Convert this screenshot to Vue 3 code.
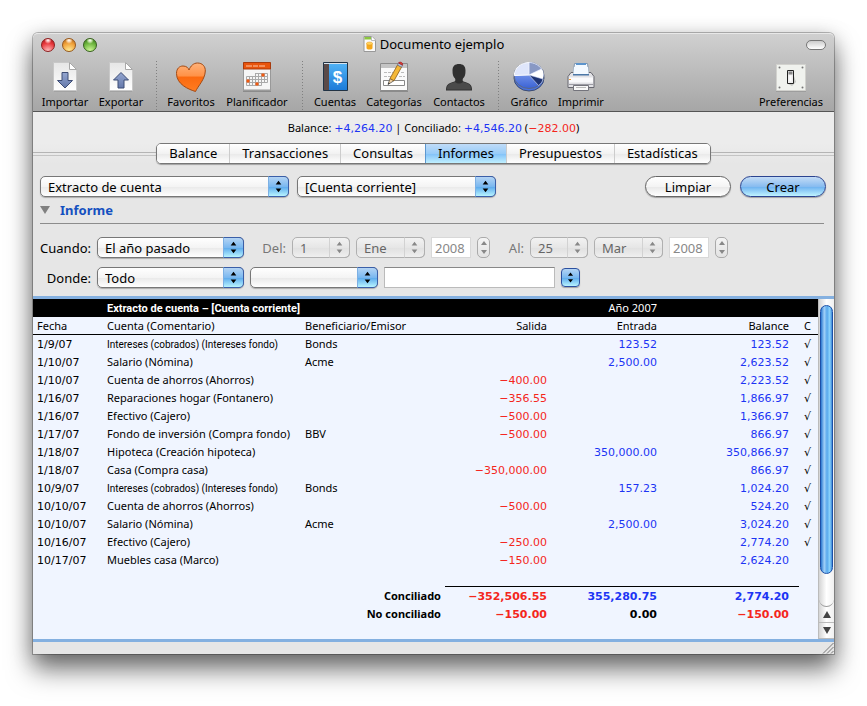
<template>
  <main class="window">
    <header class="chrome">
      <div class="titlebar">
        <div class="lights">
          <button class="light red" aria-label="Cerrar"></button>
          <button class="light amber" aria-label="Minimizar"></button>
          <button class="light green" aria-label="Ampliar"></button>
        </div>
        <h1 class="title">
          <svg width="13" height="16" viewBox="0 0 13 16">
            <path d="M1 .5h8l3.500 3.500v11.500H1z" fill="#fafafa" stroke="#999" />
            <path d="M1.500 1h7v2.500h-7z" fill="#8cc63f" />
            <path d="M8.500.5v4h4" fill="#fff" stroke="#bbb" />
            <path d="M3.500 7.500v4.500c0 2 6 2 6 0V7.500z" fill="#f5a81c" />
            <ellipse cx="6.500" cy="7.500" rx="3" ry="1.500" fill="#ffd35c" stroke="#e8951a" stroke-width=".5" />
          </svg>
          Documento ejemplo
        </h1>
        <div class="titlebar-end">
          <button class="pill" aria-label="Barra de herramientas"></button>
        </div>
      </div>

      <nav class="toolbar">
        <button class="tool w56">
          <svg viewBox="0 0 32 32">
            <path d="M5 29.500h22v1H5z" fill="#777" opacity=".5" />
            <path d="M4.500 1.500h16l7 7v21h-23z" fill="url(#paper)" stroke="#c8c8c8" />
            <path d="M20.500 1.500v7h7z" fill="#fff" stroke="#a8a8a8" />
            <path d="M13 11.500h6v8h4.500L16 27l-7.500-7.500H13z" fill="url(#arrow)" stroke="#3d4c74" stroke-linejoin="round" />
            <defs>
              <linearGradient id="paper" x2="0" y2="1">
                <stop offset="0" stop-color="#e6e6e6" />
                <stop offset="1" stop-color="#fff" />
              </linearGradient>
              <linearGradient id="arrow" x2="0" y2="1">
                <stop offset="0" stop-color="#94a6d0" />
                <stop offset="1" stop-color="#6478aa" />
              </linearGradient>
            </defs>
          </svg>
          Importar
        </button>
        <button class="tool w56">
          <svg viewBox="0 0 32 32">
            <path d="M5 29.500h22v1H5z" fill="#777" opacity=".5" />
            <path d="M4.500 1.500h16l7 7v21h-23z" fill="url(#paper)" stroke="#c8c8c8" />
            <path d="M20.500 1.500v7h7z" fill="#fff" stroke="#a8a8a8" />
            <path d="M13 27h6v-8h4.500L16 11.500 8.500 19H13z" fill="url(#arrow)" stroke="#3d4c74" stroke-linejoin="round" />
          </svg>
          Exportar
        </button>
        <span class="divider"></span>
        <button class="tool w56">
          <svg viewBox="0 0 32 32">
            <defs>
              <linearGradient id="heart" x2="0" y2="1">
                <stop offset="0" stop-color="#ffb27a" />
                <stop offset=".45" stop-color="#ff9248" />
                <stop offset=".5" stop-color="#fb6a10" />
                <stop offset="1" stop-color="#ff7d22" />
              </linearGradient>
            </defs>
            <path d="M20.500 30.500C14 28.500 1.500 23.500 1.500 12.500 1.500 7.500 4.500 5 8 5c3.500 0 5.500 2 6 4C15.500 5 18.500 2 22.500 2c5 0 8 3.500 7.800 8C30 18.500 23 25 20.500 30.500z" fill="url(#heart)" stroke="#a34a14" />
          </svg>
          Favoritos
        </button>
        <button class="tool w76">
          <svg viewBox="0 0 32 32">
            <path d="M2 29.500h28v1.500H2z" fill="#666" opacity=".5" />
            <path d="M2.500 1.500h27v27.500h-27z" fill="#f6f6f6" stroke="#999" />
            <path d="M2.500 1.500h27V8h-27z" fill="#e8540c" stroke="#a83a0c" />
            <path d="M5 5h6m1 0h5m1 0h6" stroke="#ffc9a8" />
            <path d="M14.500 12.500h12v3h-12zM5.500 15.500h21v3h-21zM5.500 18.500h21v3h-21zM5.500 21.500h15v3h-15zM8.500 15v9.500M11.500 15v9.500M14.500 12v12M17.500 12v12M20.500 12v12M23.500 12v9" fill="none" stroke="#aaa" />
            <path d="M20.500 12.500h3v3h-3zM5.500 18.500h3v3h-3zM14.500 21.500h3v3h-3z" fill="#f25a10" />
          </svg>
          Planificador
        </button>
        <span class="divider"></span>
        <button class="tool w52">
          <svg viewBox="0 0 32 32">
            <defs>
              <linearGradient id="book" x2="0" y2="1">
                <stop offset="0" stop-color="#52b4f6" />
                <stop offset="1" stop-color="#1c7ad8" />
              </linearGradient>
            </defs>
            <path d="M4.500 1.500h24v28h-24z" fill="url(#book)" stroke="#234" />
            <path d="M5 2h5v27H5z" fill="#5a4a48" />
            <path d="M5 2.500h23" stroke="#d8e4ee" />
            <text x="18.500" y="22" class="dollar">$</text>
          </svg>
          Cuentas
        </button>
        <button class="tool w66">
          <svg viewBox="0 0 32 32">
            <path d="M2 29.500h28v1.500H2z" fill="#666" opacity=".5" />
            <path d="M2.500 2.500h27v27h-27z" fill="#fafafa" stroke="#8c8c8c" />
            <path d="M3 3h26v4H3z" fill="#c4c4c4" />
            <path d="M6 11.500h9m8 0h4M6 15.500h7m8 0h6" stroke="#bbb" stroke-dasharray="3 1" />
            <path d="M5.500 19.500h21v5h-21z" fill="#fff" stroke="#888" />
            <path d="M10 23.500l2-6 4 2.200z" fill="#f0d0a0" stroke="#444" stroke-width=".7" />
            <path d="M12 17.500L19.500 4l4 2.200L16 19.700z" fill="#f4b838" stroke="#8a5c18" stroke-width=".8" />
            <path d="M19.500 4l1-2 4 2.200-1 2z" fill="#b8c4dc" stroke="#667" stroke-width=".6" />
            <path d="M20.500 2c1-2 5-.5 4 2.200z" fill="#dc4030" stroke="#912" stroke-width=".6" />
            <path d="M10 23.500l.7-2 1.200.8z" fill="#222" />
          </svg>
          Categorías
        </button>
        <button class="tool w64">
          <svg viewBox="0 0 32 32">
            <path d="M3 29.500c0-6 1.500-6.500 8.500-9 1-.5 1-2 .5-3-2-2-2.500-4-2.500-8C9.500 5 12 3 16 3s6.500 2 6.500 6.500c0 4-.5 6-2.500 8-.5 1-.5 2.500.5 3 7 2.500 8.500 3 8.500 9z" fill="#303030" />
            <path d="M4 28.500c0-5 1.500-5.500 8-7.500 3 2 5 2 8 0 6.500 2 8 2.500 8 7.500z" fill="#4a4a4a" />
          </svg>
          Contactos
        </button>
        <span class="divider"></span>
        <button class="tool w48">
          <svg viewBox="0 0 32 32">
            <defs>
              <linearGradient id="pie" x2="0" y2="1">
                <stop offset="0" stop-color="#9cb6fa" />
                <stop offset="1" stop-color="#3a62d4" />
              </linearGradient>
            </defs>
            <ellipse cx="16" cy="17" rx="15" ry="13" fill="#4a72dc" stroke="#3c4c70" />
            <ellipse cx="16" cy="14.500" rx="15" ry="13" fill="url(#pie)" stroke="#5c6884" />
            <path d="M16 14V1.500C8 1.500 1.300 7 1.300 14.500z" fill="#dfe6fb" stroke="#fff" />
            <path d="M16 14V1.500c5 0 10 2.500 12.500 6.500z" fill="#8898c4" stroke="#dde4f8" />
            <path d="M16 14l13-6c2 3 2 7 .5 10.500z" fill="#fff" />
            <path d="M16 14l14 4c-.5 3-2.500 5-4.500 6.500z" fill="#1f3474" stroke="#dde4f8" stroke-width=".6" />
          </svg>
          Gráfico
        </button>
        <button class="tool w56">
          <svg viewBox="0 0 32 32">
            <path d="M9.500 2.500h13l1.500 11H8z" fill="#f3f9ff" stroke="#8298b0" />
            <path d="M11 2h10v2H11z" fill="#5c94cc" />
            <path d="M6 11.500h20l3 4v11H3v-11z" fill="#e2e2e6" stroke="#686870" />
            <path d="M8 12h16v2.500H8z" fill="#4c78a8" />
            <path d="M9 6h14l.8 7H8.200z" fill="#f3f9ff" />
            <path d="M4 16.500h24v5H4z" fill="#fafafc" />
            <path d="M4 18.500h2" stroke="#f0982c" />
            <path d="M4 23.500h24" stroke="#9c9ca4" />
            <path d="M8.500 24.500h15v5h-15z" fill="#f8f8f8" stroke="#74747c" />
            <path d="M11 26.500h10" stroke="#bbb" />
          </svg>
          Imprimir
        </button>
        <button class="tool w66 last">
          <svg viewBox="0 0 32 32">
            <path d="M1 29.500h30v1H1z" fill="#666" opacity=".5" />
            <path d="M1.500 3.500h29v26h-29z" fill="#f0f2ee" stroke="#d2d2ce" />
            <path d="M18 12l3 9-4 4-4-2z" fill="#c6c8c4" />
            <path d="M12.500 9.500h6v13h-6z" fill="#eee" stroke="#222" />
            <path d="M13.500 10.500h4v3h-4z" fill="#888" />
            <path d="M15.500 14.500v6" stroke="#fff" stroke-width="2" />
            <g fill="#777">
              <circle cx="4.500" cy="6.500" r="1" />
              <circle cx="27.500" cy="6.500" r="1" />
              <circle cx="4.500" cy="26.500" r="1" />
              <circle cx="27.500" cy="26.500" r="1" />
            </g>
          </svg>
          Preferencias
        </button>
      </nav>
    </header>

    <p class="summary">
      Balance: <span class="pos digits">+4,264.20</span> | Conciliado:
      <span class="pos digits">+4,546.20</span> (<span class="neg digits">−282.00</span>)
    </p>

    <nav class="tabs">
      <div class="tab-group">
        <button
          v-for="tab in tabs"
          :key="tab"
          class="tab"
          :class="{ active: tab === activeTab }"
          @click="activeTab = tab"
        >
          {{ tab }}
        </button>
      </div>
    </nav>

    <section class="panel">
      <div class="report-bar">
        <span class="popup report-kind">
          <select v-model="kind" aria-label="Tipo de informe">
            <option>Extracto de cuenta</option>
          </select>
          <svg viewBox="0 0 20 20"><path d="M10 4l3 4H7zM10 16l3-4H7z" /></svg>
        </span>
        <span class="popup report-account">
          <select v-model="account" aria-label="Cuenta">
            <option>[Cuenta corriente]</option>
          </select>
          <svg viewBox="0 0 20 20"><path d="M10 4l3 4H7zM10 16l3-4H7z" /></svg>
        </span>
        <div class="actions">
          <button class="push">Limpiar</button>
          <button class="push primary">Crear</button>
        </div>
      </div>

      <h2 class="section-title">
        <svg width="10" height="8" viewBox="0 0 10 8"><path d="M0 0h10L5 8z" fill="#808080" /></svg>
        Informe
      </h2>

      <div class="filters">
        <div class="filter-row">
          <label class="lead" for="when">Cuando:</label>
          <span class="popup wide">
            <select id="when" v-model="when">
              <option>El año pasado</option>
            </select>
            <svg viewBox="0 0 20 20"><path d="M10 4l3 4H7zM10 16l3-4H7z" /></svg>
          </span>
          <div v-for="d in dates" :key="d.id" class="date">
            <label :for="d.id">{{ d.label }}</label>
            <span class="popup day">
              <select :id="d.id" disabled>
                <option>{{ d.day }}</option>
              </select>
              <svg viewBox="0 0 20 20"><path d="M10 4l3 4H7zM10 16l3-4H7z" /></svg>
            </span>
            <span class="popup month">
              <select disabled :aria-label="d.label + ' mes'">
                <option>{{ d.month }}</option>
              </select>
              <svg viewBox="0 0 20 20"><path d="M10 4l3 4H7zM10 16l3-4H7z" /></svg>
            </span>
            <input class="year" type="text" :value="d.year" disabled :aria-label="d.label + ' año'" />
            <span class="stepper">
              <button disabled aria-label="Más"><svg viewBox="0 0 6 4"><path d="M3 0l3 4H0z" /></svg></button>
              <button disabled aria-label="Menos"><svg viewBox="0 0 6 4"><path d="M3 4l3-4H0z" /></svg></button>
            </span>
          </div>
        </div>
        <div class="filter-row">
          <label class="lead" for="where">Donde:</label>
          <span class="popup wide">
            <select id="where" v-model="where">
              <option>Todo</option>
            </select>
            <svg viewBox="0 0 20 20"><path d="M10 4l3 4H7zM10 16l3-4H7z" /></svg>
          </span>
          <span class="popup operator">
            <select aria-label="Condición">
              <option></option>
            </select>
            <svg viewBox="0 0 20 20"><path d="M10 4l3 4H7zM10 16l3-4H7z" /></svg>
          </span>
          <input v-model="query" class="query" type="text" aria-label="Valor" />
          <button class="mini" aria-label="Elegir valor">
            <svg viewBox="0 0 20 20"><path d="M10 4l3 4H7zM10 16l3-4H7z" /></svg>
          </button>
        </div>
      </div>
    </section>

    <section class="report">
      <table>
        <colgroup>
          <col class="c-date" />
          <col class="c-account" />
          <col />
          <col class="c-out" />
          <col class="c-in" />
          <col class="c-balance" />
          <col class="c-check" />
        </colgroup>
        <thead>
          <tr class="caption">
            <th></th>
            <th colspan="2">Extracto de cuenta – [Cuenta corriente]</th>
            <th colspan="2" class="num period">Año 2007</th>
            <th colspan="2"></th>
          </tr>
          <tr class="heads">
            <th>Fecha</th>
            <th>Cuenta (Comentario)</th>
            <th>Beneficiario/Emisor</th>
            <th class="num">Salida</th>
            <th class="num">Entrada</th>
            <th class="num balance">Balance</th>
            <th class="check">C</th>
          </tr>
        </thead>
        <tbody>
          <tr v-for="(r, i) in rows" :key="i">
            <td class="digits">{{ r[0] }}</td>
            <td :class="{ tight: r[1].length > 37 }">{{ r[1] }}</td>
            <td>{{ r[2] }}</td>
            <td class="num digits neg">{{ r[3] }}</td>
            <td class="num digits pos">{{ r[4] }}</td>
            <td class="num digits pos balance">{{ r[5] }}</td>
            <td class="check">{{ r[6] ? '√' : '' }}</td>
          </tr>
        </tbody>
        <tfoot>
          <tr class="rule">
            <td colspan="3"></td>
            <td colspan="3" class="line"></td>
            <td></td>
          </tr>
          <tr>
            <th colspan="3" class="num">Conciliado</th>
            <td class="num digits neg">−352,506.55</td>
            <td class="num digits pos">355,280.75</td>
            <td class="num digits pos balance">2,774.20</td>
            <td></td>
          </tr>
          <tr>
            <th colspan="3" class="num">No conciliado</th>
            <td class="num digits neg">−150.00</td>
            <td class="num digits">0.00</td>
            <td class="num digits neg balance">−150.00</td>
            <td></td>
          </tr>
        </tfoot>
      </table>
      <div class="scrollbar">
        <div class="track">
          <div class="thumb"></div>
        </div>
        <button aria-label="Subir"><svg viewBox="0 0 8 7"><path d="M4 0l4 7H0z" /></svg></button>
        <button aria-label="Bajar"><svg viewBox="0 0 8 7"><path d="M4 7l4-7H0z" /></svg></button>
      </div>
    </section>

    <footer class="status">
      <svg width="12" height="12" viewBox="0 0 12 12">
        <path d="M1 11.500L11.500 1M5 11.500L11.500 5M9 11.500L11.500 9" stroke="#777" />
      </svg>
    </footer>
  </main>
</template>

<script setup>
import { ref } from 'vue';

const tabs = ['Balance', 'Transacciones', 'Consultas', 'Informes', 'Presupuestos', 'Estadísticas'];
const activeTab = ref('Informes');

const kind = ref('Extracto de cuenta');
const account = ref('[Cuenta corriente]');
const when = ref('El año pasado');
const where = ref('Todo');
const query = ref('');

const dates = [
  { id: 'from', label: 'Del:', day: '1', month: 'Ene', year: '2008' },
  { id: 'to', label: 'Al:', day: '25', month: 'Mar', year: '2008' }
];

// fecha, cuenta, beneficiario, salida, entrada, balance, conciliado
const rows = [
  ['1/9/07', 'Intereses (cobrados) (Intereses fondo)', 'Bonds', '', '123.52', '123.52', true],
  ['1/10/07', 'Salario (Nómina)', 'Acme', '', '2,500.00', '2,623.52', true],
  ['1/10/07', 'Cuenta de ahorros (Ahorros)', '', '−400.00', '', '2,223.52', true],
  ['1/16/07', 'Reparaciones hogar (Fontanero)', '', '−356.55', '', '1,866.97', true],
  ['1/16/07', 'Efectivo (Cajero)', '', '−500.00', '', '1,366.97', true],
  ['1/17/07', 'Fondo de inversión (Compra fondo)', 'BBV', '−500.00', '', '866.97', true],
  ['1/18/07', 'Hipoteca (Creación hipoteca)', '', '', '350,000.00', '350,866.97', true],
  ['1/18/07', 'Casa (Compra casa)', '', '−350,000.00', '', '866.97', true],
  ['10/9/07', 'Intereses (cobrados) (Intereses fondo)', 'Bonds', '', '157.23', '1,024.20', true],
  ['10/10/07', 'Cuenta de ahorros (Ahorros)', '', '−500.00', '', '524.20', true],
  ['10/10/07', 'Salario (Nómina)', 'Acme', '', '2,500.00', '3,024.20', true],
  ['10/16/07', 'Efectivo (Cajero)', '', '−250.00', '', '2,774.20', true],
  ['10/17/07', 'Muebles casa (Marco)', '', '−150.00', '', '2,624.20', false]
];
</script>

<style>
body {
  background: #fff;
}
</style>

<style scoped>
* {
  box-sizing: border-box;
}

button,
select,
input {
  font: inherit;
  color: inherit;
  margin: 0;
}

button {
  border: none;
  background: none;
  padding: 0;
}

.window {
  margin: 33px 33px 50px;
  border-radius: 5px 5px 0 0;
  background: #e6e6e6;
  font-family: 'Noto Sans', 'Open Sans', sans-serif;
  font-size: 13px;
  color: #000;
  box-shadow: 0 0 0 1px rgba(0, 0, 0, 0.25), 0 16px 26px rgba(0, 0, 0, 0.5), 0 4px 20px rgba(0, 0, 0, 0.25);
}

.chrome {
  border-radius: 5px 5px 0 0;
  border-top: 1px solid #e8e8e8;
  border-bottom: 1px solid #555;
  background: linear-gradient(#d0d0d0, #a6a6a6);
}

.titlebar {
  display: flex;
  align-items: center;
  height: 22px;
  padding: 0 8px;
}

.lights,
.titlebar-end {
  display: flex;
  flex: 1;
  gap: 7px;
}

.titlebar-end {
  justify-content: flex-end;
}

.light {
  width: 14px;
  height: 14px;
  border-radius: 50%;
  border: 1px solid #555;
}

.red {
  background: radial-gradient(circle at 50% 10%, #fff 0, #f8a0a0 15%, transparent 30%),
    radial-gradient(circle at 50% 100%, #ffc4c4, #e8383c 60%, #9c1418);
  border-color: #8c2020;
}

.amber {
  background: radial-gradient(circle at 50% 10%, #fff 0, #f8d0a0 15%, transparent 30%),
    radial-gradient(circle at 50% 100%, #fff09c, #f0a038 60%, #a8601c);
  border-color: #96581c;
}

.green {
  background: radial-gradient(circle at 50% 10%, #fff 0, #c0e0a0 15%, transparent 30%),
    radial-gradient(circle at 50% 100%, #d4fc9c, #6cb43c 60%, #34701c);
  border-color: #36601c;
}

.title {
  display: flex;
  align-items: center;
  gap: 4px;
  margin: 0;
  padding-bottom: 2px;
  font-size: 13px;
  font-weight: 400;
}

.pill {
  width: 20px;
  height: 10px;
  border: 1px solid #777;
  border-radius: 5px;
  background: linear-gradient(#ccc, #fff);
}

.toolbar {
  display: flex;
  height: 55px;
  padding: 5px 10px 0 4px;
}

.tool {
  display: flex;
  flex-direction: column;
  align-items: center;
  gap: 1px;
  font-size: 11px;
  line-height: 16px;
  white-space: nowrap;
}

.tool svg {
  width: 32px;
  height: 32px;
}

.dollar {
  font: bold 17px 'Liberation Sans', sans-serif;
  fill: #fff;
  text-anchor: middle;
}

.w48 { width: 48px; }
.w52 { width: 52px; }
.w56 { width: 56px; }
.w64 { width: 64px; }
.w66 { width: 66px; }
.w76 { width: 76px; }

.last {
  margin-left: auto;
}

.divider {
  width: 14px;
  height: 50px;
  background: repeating-linear-gradient(#808080 0 1px, transparent 1px 3px) center / 1px 100% no-repeat;
}

.summary {
  height: 31px;
  margin: 0;
  padding-top: 8px;
  background: #ececec;
  font-size: 11px;
  line-height: 16px;
  text-align: center;
}

.digits {
  font-family: 'DejaVu Sans', sans-serif;
  font-size: 11px;
}

.pos {
  color: #1c34f4;
}

.neg {
  color: #f4261c;
}

.tabs {
  display: flex;
  align-items: center;
  background: linear-gradient(#ececec, #e6e6e6);
}

.tabs::before,
.tabs::after {
  content: '';
  flex: 1;
  height: 2px;
  border-top: 1px solid #b4b4b4;
  border-bottom: 1px solid #c4c4c4;
}

.tab-group {
  display: flex;
  height: 21px;
  border: 1px solid #777;
  border-radius: 5px;
  overflow: hidden;
  box-shadow: 0 1px 1px rgba(0, 0, 0, 0.3);
}

.tab {
  padding: 0 12px;
  line-height: 19px;
  background: linear-gradient(#fff, #f2f2f2 50%, #e9e9e9 51%, #fff);
  border-left: 1px solid #ccc;
}

.tab:first-child {
  border-left: none;
}

.tab.active {
  background: linear-gradient(#c0dcf8, #98ccf8 50%, #80c0f8 51%, #c0f0ff);
  border-left-color: #5c98d0;
}

.panel {
  padding: 12px 8px 8px 7px;
}

.report-bar {
  display: flex;
  align-items: center;
  gap: 8px;
}

.popup {
  display: grid;
  height: 21px;
  flex: none;
}

.popup select {
  grid-area: 1 / 1;
  width: 100%;
  height: 21px;
  padding: 0 22px 0 7px;
  appearance: none;
  border: 1px solid #777;
  border-radius: 5px;
  background: linear-gradient(#fff, #f4f4f4 50%, #e9e9e9 51%, #fff);
  box-shadow: 0 1px 1px rgba(0, 0, 0, 0.25);
  line-height: 18px;
}

.popup svg {
  grid-area: 1 / 1;
  justify-self: end;
  width: 21px;
  height: 21px;
  border: 1px solid #3b5fa8;
  border-left-color: #7cb0e4;
  border-radius: 0 5px 5px 0;
  background: linear-gradient(#b4d4f4, #7ab8f0 50%, #5aa8ec 51%, #b8f4ff);
  pointer-events: none;
}

.popup select:disabled {
  border-color: #b0b0b0;
  background: linear-gradient(#f2f2f2, #e6e6e6 50%, #e0e0e0 51%, #efefef);
  box-shadow: none;
  color: #666;
  opacity: 1;
}

.popup select:disabled + svg {
  border-color: #b0b0b0;
  border-left-color: #d2d2d2;
  background: none;
  fill: #888;
}

.report-kind {
  width: 249px;
}

.report-account {
  width: 199px;
}

.actions {
  display: flex;
  gap: 9px;
  margin-left: auto;
}

.push {
  width: 86px;
  height: 21px;
  border: 1px solid #666;
  border-radius: 11px;
  background: linear-gradient(#fff, #f4f4f4 50%, #e8e8e8 51%, #fff);
  box-shadow: 0 1px 1px rgba(0, 0, 0, 0.3);
  line-height: 18px;
}

.primary {
  border-color: #2c4490;
  background: linear-gradient(#c4dcf6, #88bcf0 50%, #6cb0f0 51%, #c0f4ff);
}

.section-title {
  display: flex;
  align-items: center;
  gap: 10px;
  height: 27px;
  margin: 0 2px 0 0;
  border-bottom: 1px solid #8c8c8c;
  font-size: 13px;
  color: #1450c0;
}

.filters {
  display: grid;
  gap: 9px;
  padding-top: 13px;
}

.filter-row {
  display: flex;
  align-items: center;
  gap: 6px;
  height: 21px;
}

.lead {
  flex: none;
  width: 51px;
  text-align: right;
  white-space: nowrap;
}

.wide {
  width: 147px;
}

.day {
  width: 58px;
}

.month {
  width: 69px;
}

.date {
  display: flex;
  align-items: center;
  gap: 6px;
  color: #777;
}

.wide + .date {
  padding-left: 8px;
}

.date label {
  width: 28px;
  text-align: right;
}

.year {
  width: 40px;
  height: 21px;
  padding: 0 3px;
  border: 1px solid #d8d8d8;
  background: #fff;
  color: #888;
}

.stepper {
  display: flex;
  flex-direction: column;
  width: 13px;
  height: 21px;
  border: 1px solid #aaa;
  border-radius: 5px;
  background: linear-gradient(#f4f4f4, #e2e2e2);
}

.stepper button {
  display: flex;
  flex: 1;
  align-items: center;
  justify-content: center;
}

.stepper svg {
  width: 6px;
  height: 4px;
  fill: #888;
}

.operator {
  width: 128px;
}

.query {
  width: 171px;
  height: 21px;
  border: 1px solid #bbb;
  border-top-color: #888;
  background: #fff;
}

.mini {
  width: 19px;
  height: 19px;
  border: 1px solid #2c50a0;
  border-radius: 4px;
  background: linear-gradient(#b4d4f4, #7ab8f0 50%, #5aa8ec 51%, #b8f4ff);
  box-shadow: 0 1px 1px rgba(0, 0, 0, 0.3);
}

.mini svg {
  display: block;
}

.report {
  display: flex;
  border-top: 3px solid #84b0e0;
  border-bottom: 3px solid #84b0e0;
  background: #f0f5ff;
}

table {
  flex: 1;
  width: 100%;
  min-width: 0;
  table-layout: fixed;
  border-collapse: separate;
  border-spacing: 0;
  margin-bottom: 16px;
  font-size: 11px;
  line-height: 16px;
}

.c-date { width: 70px; }
.c-account { width: 198px; }
.c-out { width: 106px; }
.c-in { width: 110px; }
.c-balance { width: 138px; }
.c-check { width: 19px; }

th,
td {
  height: 18px;
  padding: 1px 4px 0;
  text-align: left;
  vertical-align: baseline;
  white-space: nowrap;
}

.num {
  text-align: right;
}

.balance {
  padding-right: 10px;
}

.check {
  padding-left: 0;
  padding-right: 2px;
  text-align: center;
}

td.check {
  font-family: 'DejaVu Sans', sans-serif;
}

.tight {
  font-family: Roboto, sans-serif;
  font-size: 10px;
}

.caption th {
  background: #000;
  color: #fff;
  font-family: Roboto, sans-serif;
}

.caption .period {
  font-family: inherit;
  font-weight: 400;
}

.heads th {
  border-bottom: 1px solid #000;
  font-weight: 400;
}

.rule .line {
  border-bottom: 1px solid #000;
}

tfoot .digits {
  font-weight: 700;
}

.scrollbar {
  display: flex;
  flex: none;
  flex-direction: column;
  width: 16px;
  border-left: 1px solid #bbb;
  background: linear-gradient(90deg, #d4d4d4, #fff 50%, #f0f0f0);
}

.track {
  display: flex;
  flex: 1;
  padding: 6px 1px 32px;
  border-bottom: 1px solid #999;
  border-radius: 0 0 8px 8px;
}

.thumb {
  flex: 1;
  border: 1px solid #1c50a8;
  border-radius: 7px;
  background: linear-gradient(90deg, #2c78d0, #a0d0f8 30%, #58a8ec 55%, #8cd4fc 80%, #3c88d8);
}

.scrollbar button {
  display: flex;
  align-items: center;
  justify-content: center;
  height: 16px;
  border-bottom: 1px solid #bbb;
}

.scrollbar button svg {
  width: 8px;
  height: 7px;
  fill: #444;
}

.status {
  display: flex;
  justify-content: flex-end;
  align-items: flex-end;
  height: 12px;
}
</style>
